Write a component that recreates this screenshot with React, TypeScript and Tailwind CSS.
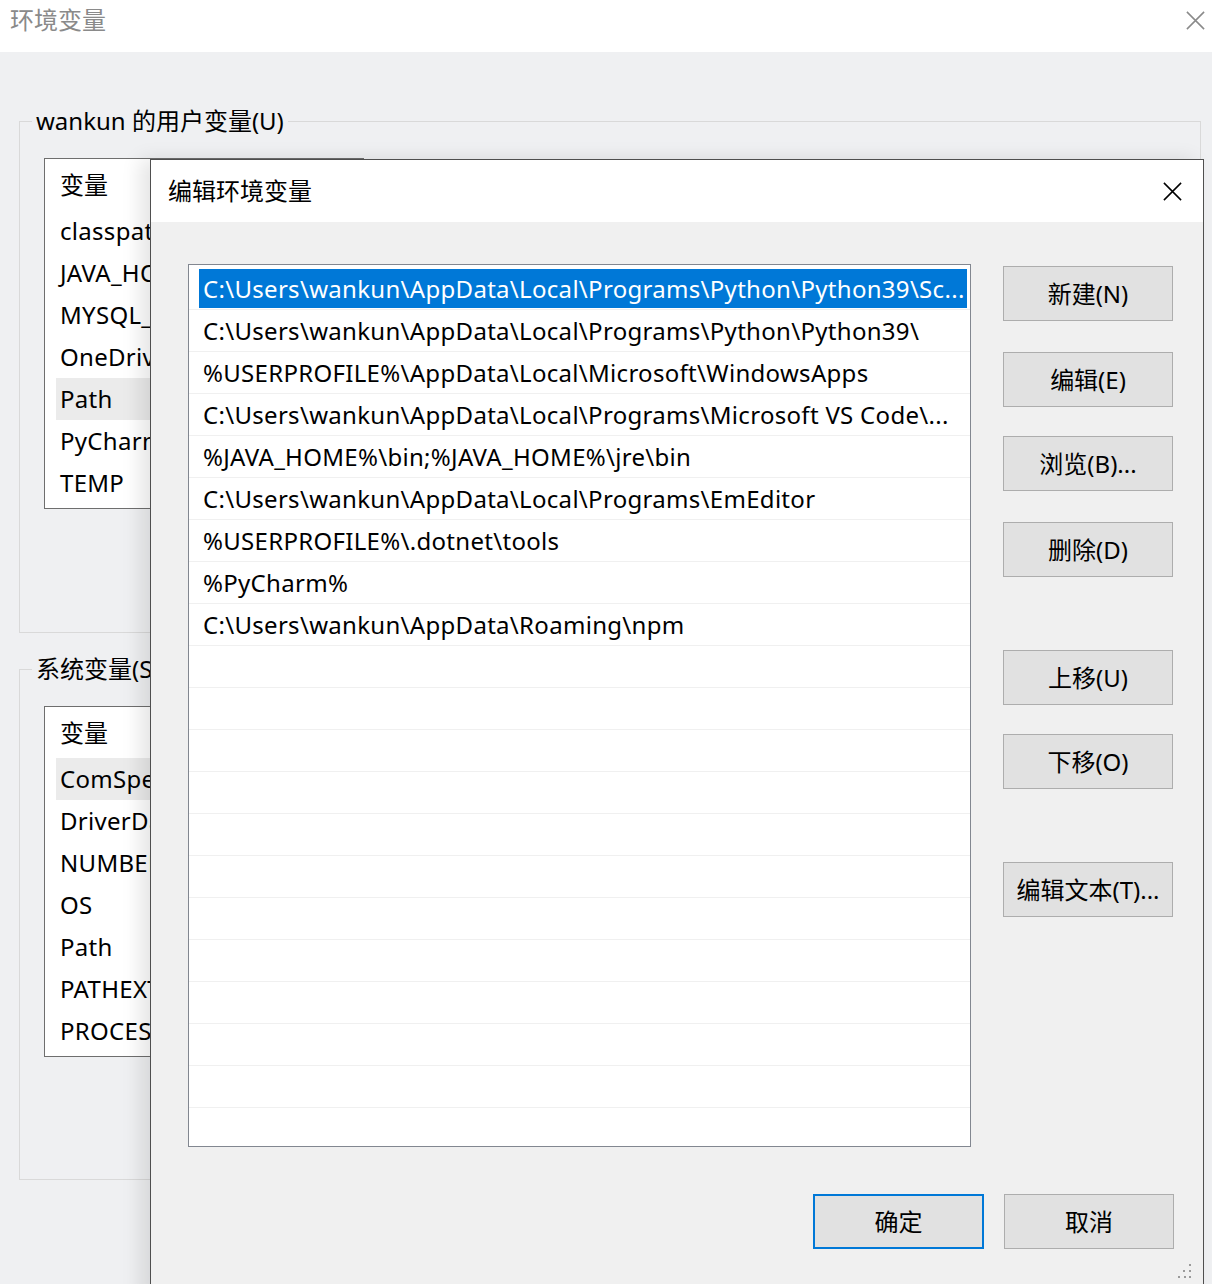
import React from "react";

const FONT = { fontFamily: '"Noto Sans", "Noto Sans CJK SC", sans-serif' };

function XIcon({ className }: { className?: string }) {
  return (
    <svg viewBox="0 0 22 22" className={className} fill="none" stroke="currentColor" strokeWidth="1.6">
      <path d="M2 2 L20 20 M20 2 L2 20" />
    </svg>
  );
}

const userVars = ["classpath", "JAVA_HOME", "MYSQL_HOME", "OneDrive", "Path", "PyCharm", "TEMP"];
const sysVars = ["ComSpec", "DriverData", "NUMBER_OF_PROCESSORS", "OS", "Path", "PATHEXT", "PROCESSOR_ARCHITECTURE"];

const paths = [
  "C:\\Users\\wankun\\AppData\\Local\\Programs\\Python\\Python39\\Sc...",
  "C:\\Users\\wankun\\AppData\\Local\\Programs\\Python\\Python39\\",
  "%USERPROFILE%\\AppData\\Local\\Microsoft\\WindowsApps",
  "C:\\Users\\wankun\\AppData\\Local\\Programs\\Microsoft VS Code\\...",
  "%JAVA_HOME%\\bin;%JAVA_HOME%\\jre\\bin",
  "C:\\Users\\wankun\\AppData\\Local\\Programs\\EmEditor",
  "%USERPROFILE%\\.dotnet\\tools",
  "%PyCharm%",
  "C:\\Users\\wankun\\AppData\\Roaming\\npm",
];

function VarList({ items, hi, pt }: { items: string[]; hi: number; pt: string }) {
  return (
    <div className={`ml-[24px] w-[320px] h-[351px] bg-white border border-[#6e6e6e] overflow-hidden ${pt}`}>
      <div className="h-[42px] flex items-center pl-[15px] text-[24px] text-black">变量</div>
      <div className="mt-[4px] pl-[11px]">
        {items.map((v, i) => (
          <div
            key={i}
            className={`h-[42px] flex items-center pl-[4px] text-[24px] tracking-[0.3px] text-black whitespace-nowrap ${
              i === hi ? "bg-[#ebebeb]" : ""
            }`}
          >
            {v}
          </div>
        ))}
      </div>
    </div>
  );
}

function Btn({ label, className = "", primary = false }: { label: string; className?: string; primary?: boolean }) {
  return (
    <div
      className={`w-[170px] h-[55px] flex items-center justify-center text-[24px] text-black bg-[#e1e1e1] ${
        primary ? "border-2 border-[#0078d7]" : "border border-[#adadad]"
      } ${className}`}
    >
      {label}
    </div>
  );
}

export default function App() {
  const rows = Array.from({ length: 21 }, (_, i) => paths[i] ?? "");
  return (
    <div className="relative w-[1212px] h-[1284px] overflow-hidden bg-[#eff0f2]" style={FONT}>
      {/* Background window */}
      <div className="h-[52px] bg-white flex items-start justify-between pl-[10px] pr-[6px] pt-[3px]">
        <span className="text-[24px] leading-[34px] text-[#8a8a8a]">环境变量</span>
        <XIcon className="mt-[7px] w-[21px] h-[21px] text-[#8a8a8a]" />
      </div>
      <div className="pl-[19px] pr-[11px] pt-[53px]">
        <fieldset className="border border-[#d9d9d9] h-[528px]">
          <legend className="ml-[12px] px-[4px] text-[24px] leading-[32px] text-black">wankun 的用户变量(U)</legend>
          <div className="mt-[21px]">
            <VarList items={userVars} hi={4} pt="pt-[5px]" />
          </div>
        </fieldset>
        <fieldset className="mt-[20px] border border-[#d9d9d9] h-[527px]">
          <legend className="ml-[12px] px-[4px] text-[24px] leading-[32px] text-black">系统变量(S)</legend>
          <div className="mt-[21px]">
            <VarList items={sysVars} hi={0} pt="pt-[5px]" />
          </div>
        </fieldset>
      </div>

      {/* Front dialog */}
      <div className="absolute left-[150px] top-[159px] w-[1054px] h-[1140px] border border-[#4f4f4f] bg-[#f0f0f0] shadow-[-10px_0_18px_rgba(0,0,0,0.10)]">
        <div className="h-[62px] bg-white flex items-center justify-between pl-[17px] pr-[20px]">
          <span className="text-[24px] text-black">编辑环境变量</span>
          <XIcon className="w-[21px] h-[21px] text-black" />
        </div>
        <div className="flex pt-[42px] pl-[37px]">
          <div className="w-[783px] h-[883px] bg-white border border-[#828790] pt-[3px] overflow-hidden">
            {rows.map((p, i) => (
              <div key={i} className="h-[42px] border-b border-[#f0f0f0] flex items-stretch">
                <div
                  className={`ml-[10px] mr-[3px] flex-1 flex items-center pl-[4px] text-[24px] tracking-[0.3px] whitespace-nowrap overflow-hidden ${
                    i === 0 ? "bg-[#0078d7] text-white my-[1px]" : "text-black"
                  }`}
                >
                  {p}
                </div>
              </div>
            ))}
          </div>
          <div className="ml-[32px] flex flex-col pt-[2px]">
            <Btn label="新建(N)" />
            <Btn label="编辑(E)" className="mt-[31px]" />
            <Btn label="浏览(B)..." className="mt-[29px]" />
            <Btn label="删除(D)" className="mt-[31px]" />
            <Btn label="上移(U)" className="mt-[73px]" />
            <Btn label="下移(O)" className="mt-[29px]" />
            <Btn label="编辑文本(T)..." className="mt-[73px]" />
          </div>
        </div>
        <div className="flex justify-end gap-[20px] pr-[29px] mt-[47px]">
          <Btn label="确定" primary className="w-[171px]" />
          <Btn label="取消" />
        </div>
        <svg className="absolute left-[1026px] top-[1102px]" width="16" height="16" viewBox="0 0 16 16" fill="#9a9a9a">
          <rect x="12" y="2" width="2" height="2" />
          <rect x="6" y="8" width="2" height="2" />
          <rect x="12" y="8" width="2" height="2" />
          <rect x="1" y="14" width="2" height="2" />
          <rect x="7" y="14" width="2" height="2" />
          <rect x="12" y="14" width="2" height="2" />
        </svg>
      </div>
    </div>
  );
}
